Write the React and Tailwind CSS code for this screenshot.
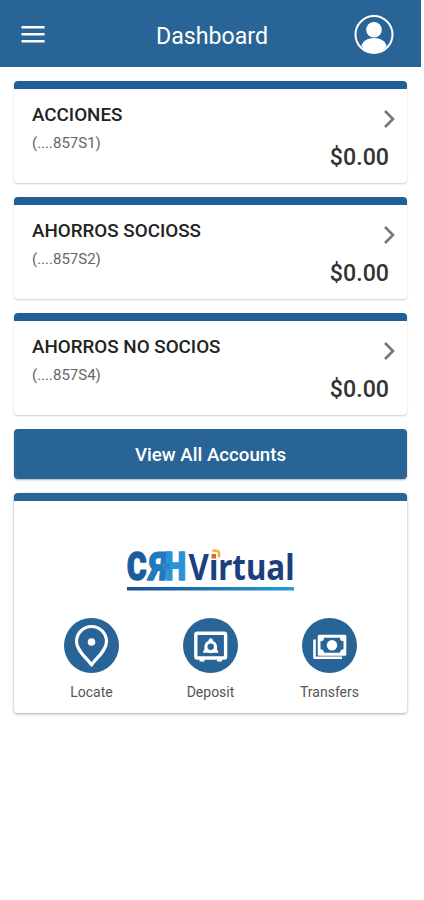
import React from 'react';

const accounts = [
  { id: 1, name: 'ACCIONES', number: '(....857S1)', balance: '$0.00' },
  { id: 2, name: 'AHORROS SOCIOSS', number: '(....857S2)', balance: '$0.00' },
  { id: 3, name: 'AHORROS NO SOCIOS', number: '(....857S4)', balance: '$0.00' },
];

const PinIcon = () => (
  <svg className="w-[55px] h-[55px]" viewBox="0 0 55 55" fill="none">
    <path
      d="M27.5 47C23.5 40.5 12.5 33 12.5 23.5a15 15 0 0 1 30 0C42.5 33 31.5 40.5 27.5 47Z"
      stroke="white"
      strokeWidth="3.2"
      strokeLinejoin="round"
    />
    <circle cx="27.5" cy="24" r="3.8" fill="white" />
  </svg>
);

const SafeIcon = () => (
  <svg className="w-[55px] h-[55px]" viewBox="0 0 55 55" fill="none">
    <rect x="12.8" y="15.2" width="29.8" height="24.8" rx="1.5" stroke="white" strokeWidth="3.4" />
    <path d="M16.5 41h5v2.5h-5zM34 41h5v2.5h-5z" fill="white" />
    <circle cx="27.7" cy="28.8" r="4.8" stroke="white" strokeWidth="3.2" />
    <path d="M26.2 20.5h3l1.3 4h-5.6zM20 34l2-4 4 4.8h-6zM35.4 34l-2-4-4 4.8h6z" fill="white" />
  </svg>
);

const CashIcon = () => (
  <svg className="w-[55px] h-[55px]" viewBox="0 0 55 55" fill="none">
    <path d="M12.5 21.5v18.300h27.500" stroke="white" strokeWidth="2.6" strokeLinejoin="round" />
    <rect x="15.7" y="16.8" width="28.6" height="21" rx="1.5" fill="white" />
    <path
      d="M22 19.800h16a3.500 3.500 0 0 0 3.500 3.500v8a3.500 3.500 0 0 0-3.500 3.500H22a3.500 3.500 0 0 0-3.500-3.500v-8a3.500 3.500 0 0 0 3.500-3.500Z"
      fill="#286496"
    />
    <circle cx="30" cy="27.2" r="5.2" fill="white" />
  </svg>
);

const actions = [
  { id: 'locate', label: 'Locate', Icon: PinIcon },
  { id: 'deposit', label: 'Deposit', Icon: SafeIcon },
  { id: 'transfers', label: 'Transfers', Icon: CashIcon },
];

const Logo = () => (
  <svg className="w-[172px] h-[66px]" viewBox="0 -14 172 66">
    <defs>
      <linearGradient id="underline" x1="0" x2="1">
        <stop offset="0" stopColor="#1d4f91" />
        <stop offset="1" stopColor="#229ddb" />
      </linearGradient>
    </defs>
    <g fontFamily="Roboto, sans-serif" fontWeight="900" fontSize="39" strokeWidth="1.6" strokeLinejoin="round">
      <text transform="translate(2 31)" fill="#1b5d9c" stroke="#1b5d9c" textLength="19.5" lengthAdjust="spacingAndGlyphs">C</text>
      <text transform="translate(41.5 31) skewX(-5) scale(-1 1)" fill="#2379be" stroke="#2379be" textLength="20" lengthAdjust="spacingAndGlyphs">R</text>
      <text transform="translate(40 31)" fill="#2a94d6" stroke="#2a94d6" textLength="21" lengthAdjust="spacingAndGlyphs">H</text>
    </g>
    {/* bar that joins the last two letters */}
    <rect x="37" y="14.5" width="8" height="5.5" fill="#2786ca" />
    <text
      x="63.5"
      y="31"
      fill="#1c3f7f"
      fontFamily="'Noto Sans', sans-serif"
      fontWeight="700"
      fontSize="35"
      textLength="106"
      lengthAdjust="spacingAndGlyphs"
    >
      Virtual
    </text>
    <rect x="84" y="0" width="9" height="11" fill="white" />
    <path d="M86.5 5h4.5v4.5h-4.5z" fill="#e8602c" />
    <path d="M87.5 1.800h4a2.500 2.500 0 0 1 2.500 2.500v4" stroke="#f6b040" strokeWidth="2.6" fill="none" />
    <rect x="2" y="38" width="167" height="3.5" fill="url(#underline)" />
  </svg>
);

const AccountCard = ({ account }) => (
  <section className="h-[102px] rounded border-t-8 border-[#1e6096] bg-white px-[18px] shadow-[0_1px_2px_rgba(0,0,0,0.2)] flex justify-between">
    <div className="pt-[14px]">
      <h2 className="text-[18.8px] leading-6 font-medium text-[#222]">{account.name}</h2>
      <p className="mt-[7px] text-[15px] leading-[18px] text-[#666]">{account.number}</p>
    </div>
    <div className="flex flex-col items-end">
      <svg className="mt-[20px] -mr-[8px] w-[14px] h-[19px]" viewBox="0 0 14 19" fill="none">
        <path d="M2 2l8 8-8 8" stroke="#777" strokeWidth="2.6" />
      </svg>
      <p className="mt-[15px] text-[23.2px] leading-[28px] font-medium text-[#333]">{account.balance}</p>
    </div>
  </section>
);

const Header = () => (
  <header className="w-[421px] h-[67px] bg-[#286496] flex items-center justify-between pl-[21px] pr-[27px] text-white">
    <svg className="mt-[1px] w-[24px] h-[17px]" viewBox="0 0 24 17" fill="white">
      <path d="M.5 0h23v2.600H.5zM.5 7h23v2.600H.5zM.5 14h23v2.600H.5z" />
    </svg>
    <h1 className="mt-[4px] ml-[25px] text-[23.2px] leading-8">Dashboard</h1>
    <svg className="w-[40px] h-[40px]" viewBox="0 0 40 40" fill="none">
      <circle cx="20" cy="20.5" r="18.5" stroke="white" strokeWidth="2" />
      <circle cx="20" cy="15.8" r="7.8" fill="white" />
      <path d="M7.500 32c1-5 6-8 12.500-8s11.500 3 12.500 8C29.500 36.500 25 39 20 39S10.500 36.500 7.500 32Z" fill="white" />
    </svg>
  </header>
);

export default function App() {
  return (
    <div className="min-h-screen bg-white font-['Roboto',sans-serif]">
      <Header />
      <main className="ml-[14px] mt-[14px] w-[393px] flex flex-col gap-[14px]">
        {accounts.map((account) => (
          <AccountCard key={account.id} account={account} />
        ))}
        <button className="h-[50px] rounded bg-[#286496] pt-[3px] text-[18.7px] font-medium text-white shadow-[0_1px_2px_rgba(0,0,0,0.3)]">
          View All Accounts
        </button>
        <section className="h-[220px] rounded border-t-8 border-[#286496] bg-white shadow-[0_1px_3px_rgba(0,0,0,0.35)] flex flex-col items-center">
          <div className="mt-[34px] h-[60px]">
            <Logo />
          </div>
          <div className="mt-[23px] flex w-[357px]">
            {actions.map(({ id, label, Icon }) => (
              <div key={id} className="flex-1 flex flex-col items-center">
                <span className="rounded-full bg-[#286496]">
                  <Icon />
                </span>
                <span className="mt-[10px] text-[14px] leading-[18px] text-[#555]">{label}</span>
              </div>
            ))}
          </div>
        </section>
      </main>
    </div>
  );
}
